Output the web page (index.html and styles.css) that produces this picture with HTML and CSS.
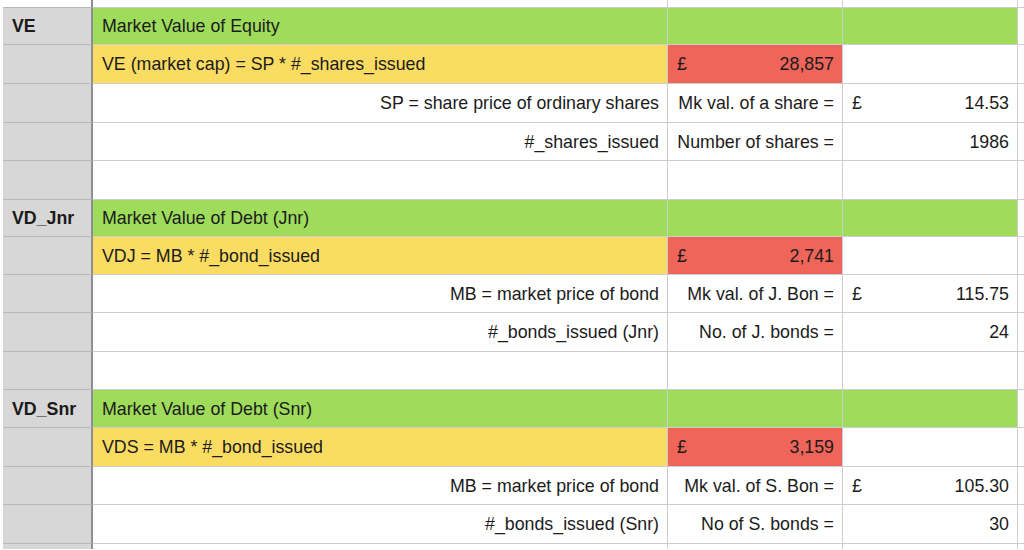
FILE: index.html
```html
<!DOCTYPE html>
<html>
<head>
<meta charset="utf-8">
<link rel="stylesheet" href="styles.css">
</head>
<body>
<div class="sheet">
  <!-- partial top row -->
  <div class="c a top"></div><div class="c top"></div><div class="c top"></div><div class="c top"></div><div class="c e top"></div>

  <div class="c a lab">VE</div><div class="c g">Market Value of Equity</div><div class="c g"></div><div class="c g"></div><div class="c e"></div>
  <div class="c a"></div><div class="c y">VE (market cap) = SP * #_shares_issued</div><div class="c r"><span>£</span><span>28,857</span></div><div class="c"></div><div class="c e"></div>
  <div class="c a"></div><div class="c rt">SP = share price of ordinary shares</div><div class="c rt">Mk val. of a share =</div><div class="c cur"><span>£</span><span>14.53</span></div><div class="c e"></div>
  <div class="c a"></div><div class="c rt">#_shares_issued</div><div class="c rt">Number of shares =</div><div class="c rt">1986</div><div class="c e"></div>
  <div class="c a"></div><div class="c"></div><div class="c"></div><div class="c"></div><div class="c e"></div>

  <div class="c a lab">VD_Jnr</div><div class="c g">Market Value of Debt (Jnr)</div><div class="c g"></div><div class="c g"></div><div class="c e"></div>
  <div class="c a"></div><div class="c y">VDJ = MB * #_bond_issued</div><div class="c r"><span>£</span><span>2,741</span></div><div class="c"></div><div class="c e"></div>
  <div class="c a"></div><div class="c rt">MB = market price of bond</div><div class="c rt">Mk val. of J. Bon =</div><div class="c cur"><span>£</span><span>115.75</span></div><div class="c e"></div>
  <div class="c a"></div><div class="c rt">#_bonds_issued (Jnr)</div><div class="c rt">No. of J. bonds =</div><div class="c rt">24</div><div class="c e"></div>
  <div class="c a"></div><div class="c"></div><div class="c"></div><div class="c"></div><div class="c e"></div>

  <div class="c a lab">VD_Snr</div><div class="c g">Market Value of Debt (Snr)</div><div class="c g"></div><div class="c g"></div><div class="c e"></div>
  <div class="c a"></div><div class="c y">VDS = MB * #_bond_issued</div><div class="c r"><span>£</span><span>3,159</span></div><div class="c"></div><div class="c e"></div>
  <div class="c a"></div><div class="c rt">MB = market price of bond</div><div class="c rt">Mk val. of S. Bon =</div><div class="c cur"><span>£</span><span>105.30</span></div><div class="c e"></div>
  <div class="c a"></div><div class="c rt">#_bonds_issued (Snr)</div><div class="c rt">No of S. bonds =</div><div class="c rt">30</div><div class="c e"></div>

  <!-- partial bottom row -->
  <div class="c a bot"></div><div class="c bot"></div><div class="c bot"></div><div class="c bot"></div><div class="c e bot"></div>
</div>
</body>
</html>
```

FILE: styles.css
```css
html, body {
  margin: 0;
  padding: 0;
  background: #ffffff;
}

body {
  width: 1024px;
  height: 550px;
  overflow: hidden;
  font-family: "Liberation Sans", Arial, sans-serif;
  font-size: 17.8px;
  color: #1b1b1b;
}

.sheet {
  margin-left: 3px;
  display: grid;
  grid-template-columns: 90px 575px 175px 175px 6px;
  grid-template-rows: 8px 37px 39px 39px 38px 39px 37px 38px 38px 39px 38px 38px 39px 38px 39px 5px;
}

.c {
  box-sizing: border-box;
  border-right: 1px solid #cdcdcd;
  border-bottom: 1px solid #cdcdcd;
  display: flex;
  align-items: center;
  padding: 1px 8px 0 9px;
  white-space: nowrap;
  overflow: hidden;
}

.a {
  background: #d7d7d7;
  border-right: 2px solid #8e8e8e;
  border-bottom-color: #b8b8b8;
}

.top {
  background: #ffffff;
  border-right-color: #cdcdcd;
}

.a.top {
  background: #ffffff;
  border-right-color: #8e8e8e;
  border-bottom-color: #b8b8b8;
}

.bot {
  border-bottom: none;
}

.e {
  border-right: none;
  padding: 0;
}

.lab {
  font-weight: bold;
}

.g {
  background: #9fdc5c;
}

.y {
  background: #fbdc63;
}

.r {
  background: #ef6559;
  justify-content: space-between;
}

.rt {
  justify-content: flex-end;
}

.cur {
  justify-content: space-between;
}
```
